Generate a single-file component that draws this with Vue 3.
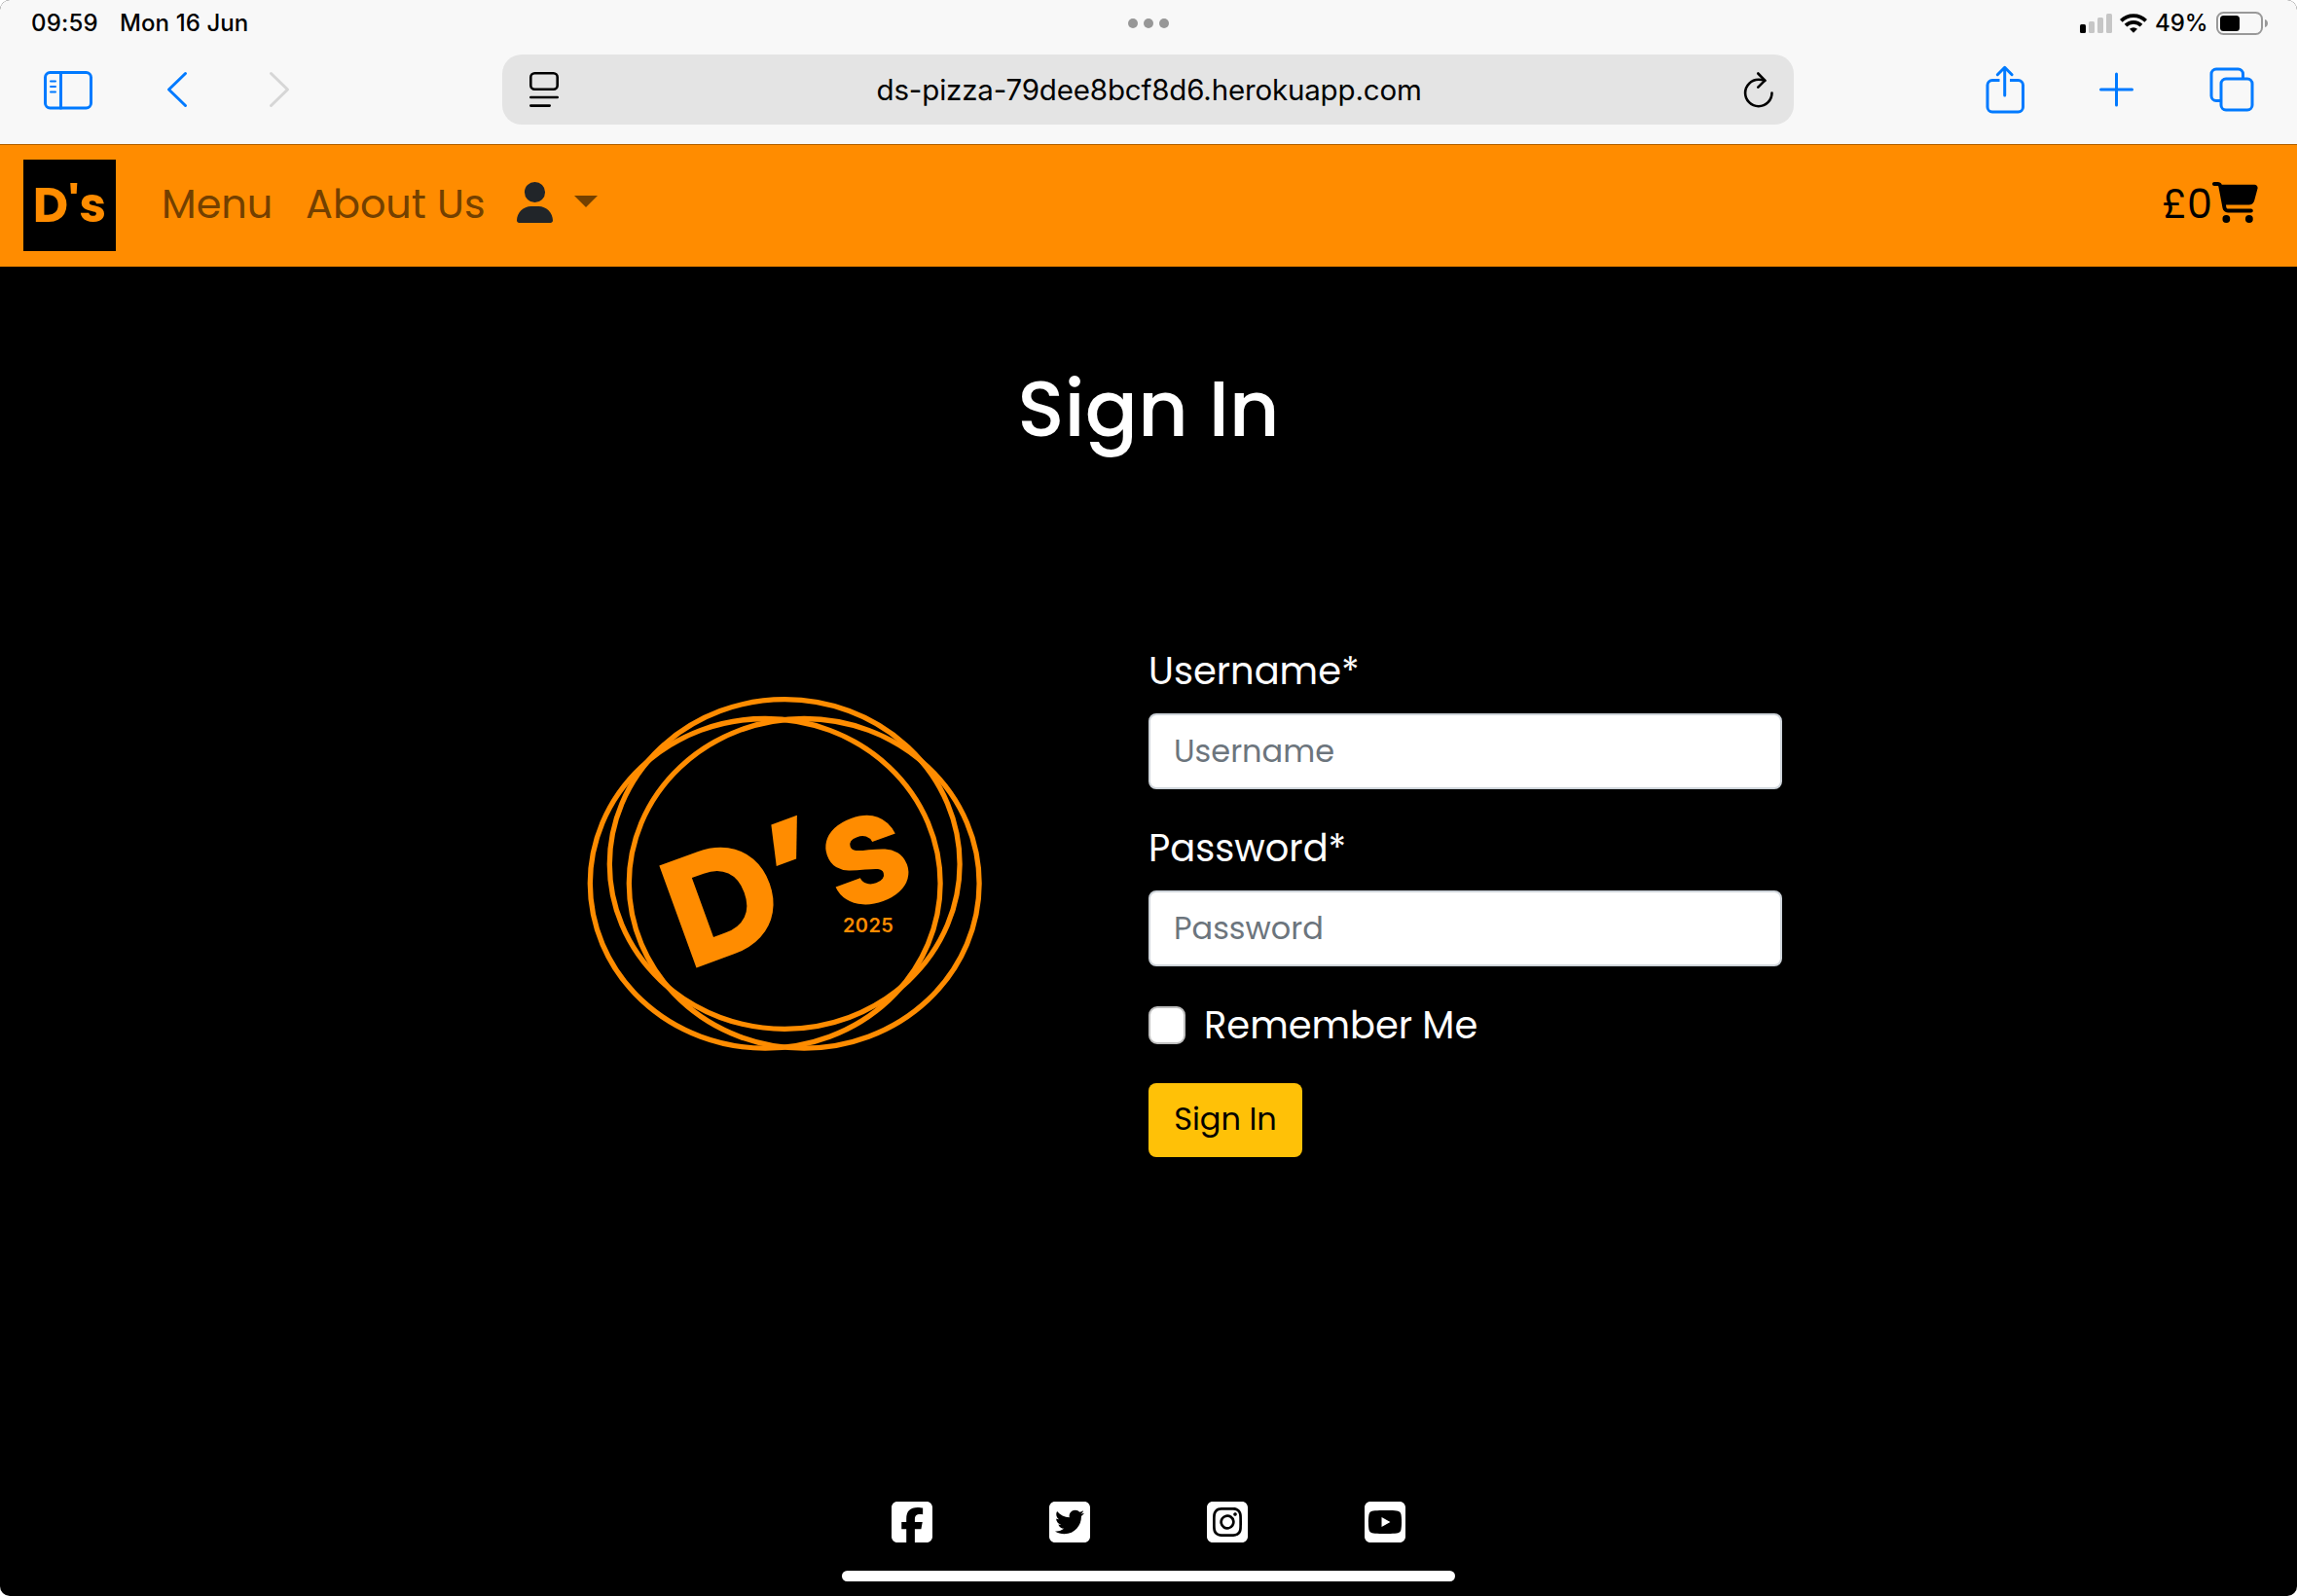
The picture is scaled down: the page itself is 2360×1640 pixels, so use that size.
<script setup>
import { ref } from 'vue'

const username = ref('')
const password = ref('')
const remember = ref(false)
const url = 'ds-pizza-79dee8bcf8d6.herokuapp.com'
const links = ['Menu', 'About Us']
const socials = [
  { name: 'facebook', d: 'M64 32C28.700 32 0 60.700 0 96V416c0 35.300 28.700 64 64 64h98.200V334.200H109.400V256h52.800V222.300c0-87.100 39.400-127.500 125-127.500c16.200 0 44.200 3.200 55.700 6.400V172c-6-.6-16.500-1-29.600-1c-42 0-58.200 15.900-58.200 57.200V256h83.600l-14.400 78.200H255V480H384c35.300 0 64-28.700 64-64V96c0-35.300-28.700-64-64-64H64z' },
  { name: 'twitter', d: 'M64 32C28.700 32 0 60.700 0 96V416c0 35.300 28.700 64 64 64H384c35.300 0 64-28.700 64-64V96c0-35.300-28.700-64-64-64H64zM351.300 199.300v0c0 86.700-66 186.600-186.600 186.600c-37.200 0-71.700-10.800-100.700-29.400c5.300 .6 10.400 .8 15.800 .8c30.700 0 58.900-10.400 81.400-28c-28.800-.6-53-19.500-61.300-45.500c10.100 1.500 19.200 1.500 29.600-1.200c-30-6.100-52.500-32.500-52.500-64.400v-.8c8.700 4.900 18.900 7.900 29.600 8.300c-9-6-16.400-14.100-21.500-23.600s-7.800-20.200-7.700-31c0-12.200 3.200-23.400 8.900-33.100c32.300 39.800 80.800 65.800 135.200 68.600c-9.300-44.500 24-80.600 64-80.600c18.900 0 35.900 7.900 47.900 20.700c14.800-2.800 29-8.300 41.600-15.800c-4.900 15.200-15.200 28-28.800 36.100c13.200-1.400 26-5.100 37.800-10.200c-8.900 13.100-20.100 24.700-32.900 34c.2 2.800 .2 5.700 .2 8.500z' },
  { name: 'instagram', d: 'M194.400 211.700a53.300 53.300 0 1 0 59.300 88.700 53.300 53.300 0 1 0 -59.300-88.700zm142.300-68.400c-5.200-5.200-11.500-9.300-18.400-12c-18.100-7.100-57.600-6.800-83.100-6.500c-4.100 0-7.900 .1-11.200 .1c-3.300 0-7.200 0-11.400-.1c-25.500-.3-64.800-.7-82.900 6.500c-6.900 2.700-13.100 6.800-18.400 12s-9.300 11.500-12 18.400c-7.100 18.100-6.700 57.700-6.500 83.200c0 4.100 .1 7.900 .1 11.100s0 7-.1 11.100c-.2 25.500-.6 65.100 6.500 83.200c2.700 6.900 6.800 13.100 12 18.400s11.500 9.300 18.400 12c18.100 7.100 57.600 6.800 83.100 6.500c4.100 0 7.900-.1 11.200-.1c3.300 0 7.200 0 11.400 .1c25.500 .3 64.800 .7 82.900-6.500c6.900-2.700 13.100-6.800 18.400-12s9.300-11.500 12-18.400c7.200-18 6.800-57.400 6.500-83c0-4.200-.1-8.100-.1-11.400s0-7.100 .1-11.400c.3-25.500 .7-64.900-6.500-83c-2.700-6.900-6.800-13.100-12-18.400zm-67.100 44.500A82 82 0 1 1 178.400 324.200a82 82 0 1 1 91.100-136.400zm29.200-1.300c-3.100-2.100-5.600-5.100-7.100-8.600s-1.800-7.300-1.100-11.100s2.600-7.100 5.200-9.800s6.100-4.500 9.800-5.200s7.600-.4 11.100 1.100s6.500 3.900 8.600 7s3.200 6.800 3.200 10.600c0 2.500-.5 5-1.400 7.300s-2.400 4.400-4.100 6.200s-3.900 3.200-6.200 4.200s-4.800 1.500-7.300 1.500c-3.800 0-7.500-1.100-10.600-3.200zM448 96c0-35.300-28.700-64-64-64H64C28.700 32 0 60.700 0 96V416c0 35.300 28.700 64 64 64H384c35.300 0 64-28.700 64-64V96zM357 389c-18.700 18.700-41.400 24.600-67 25.900c-26.400 1.500-105.600 1.500-132 0c-25.600-1.300-48.300-7.200-67-25.900s-24.600-41.400-25.800-67c-1.500-26.400-1.500-105.600 0-132c1.300-25.600 7.100-48.300 25.800-67s41.500-24.600 67-25.800c26.400-1.500 105.600-1.500 132 0c25.600 1.300 48.300 7.100 67 25.800s24.600 41.400 25.800 67c1.500 26.300 1.500 105.400 0 131.900c-1.300 25.600-7.100 48.300-25.800 67z' },
  { name: 'youtube', d: 'M282 256.200l-95.200-54.100V310.300L282 256.200zM384 32H64C28.700 32 0 60.700 0 96V416c0 35.300 28.700 64 64 64H384c35.300 0 64-28.700 64-64V96c0-35.300-28.700-64-64-64zm14.400 136.100c7.600 28.600 7.600 88.200 7.600 88.200s0 59.600-7.600 88.100c-4.200 15.800-16.500 27.700-32.200 31.900C337.900 384 224 384 224 384s-113.900 0-142.200-7.600c-15.700-4.200-28-16.100-32.200-31.900C42 315.900 42 256.300 42 256.300s0-59.700 7.600-88.200c4.200-15.800 16.500-28.200 32.200-32.400C110.100 128 224 128 224 128s113.900 0 142.200 7.700c15.700 4.200 28 16.600 32.200 32.400z' },
]
</script>

<template>
  <div class="screen">
    <header class="browser">
      <div class="status">
        <span class="time">09:59</span>
        <span class="date">Mon 16 Jun</span>
        <span class="dots"><i></i><i></i><i></i></span>
        <div class="system">
          <svg class="signal" width="34" height="20" viewBox="0 0 34 20">
            <rect x="0" y="11" width="6" height="9" rx="1.500" fill="#000" />
            <rect x="9" y="8" width="6" height="12" rx="1.500" fill="#c6c6c6" />
            <rect x="18" y="4" width="6" height="16" rx="1.500" fill="#c6c6c6" />
            <rect x="27" y="0" width="6" height="20" rx="1.500" fill="#c6c6c6" />
          </svg>
          <svg class="wifi" width="28" height="20" viewBox="0 0 28 20" fill="none" stroke="#000" stroke-width="3.800">
            <path d="M1.300 7.300a18 18 0 0 1 25.400 0" />
            <path d="M6 12.200a11.400 11.400 0 0 1 16 0" />
            <path d="M14 19.800l-4-4a5.700 5.700 0 0 1 8 0z" fill="#000" stroke="none" />
          </svg>
          <span class="percent">49%</span>
          <svg class="battery" width="54" height="24" viewBox="0 0 54 24">
            <rect x="1" y="1" width="46" height="22" rx="6.500" fill="none" stroke="#999" stroke-width="2" />
            <rect x="4" y="4" width="20" height="16" rx="3.500" fill="#000" />
            <path d="M50 8c4 1 4 7 0 8z" fill="#999" />
          </svg>
        </div>
      </div>
      <div class="toolbar">
        <svg class="sidebar" width="52" height="40" viewBox="0 0 52 40" fill="none" stroke="#007aff" stroke-width="3" stroke-linecap="round">
          <rect x="2.500" y="1.500" width="47" height="36.500" rx="5" />
          <path d="M18.500 2v36" />
          <path d="M8 10.500h5M8 16h5M8 21.500h5" stroke-width="2" />
        </svg>
        <svg class="back" width="22" height="38" viewBox="0 0 22 38" fill="none" stroke="#007aff" stroke-width="3" stroke-linecap="round" stroke-linejoin="round"><path d="M19.500 2.500L2.500 19l17 16.500" /></svg>
        <svg class="forward" width="22" height="38" viewBox="0 0 22 38" fill="none" stroke="#d6d6d6" stroke-width="3" stroke-linecap="round" stroke-linejoin="round"><path d="M2.500 2.500L19.500 19l-17 16.500" /></svg>
        <div class="address">
          <svg width="30" height="36" viewBox="0 0 30 36" fill="none" stroke="#000" stroke-width="2.600" stroke-linecap="round">
            <rect x="1.300" y="1.300" width="27.400" height="16.500" rx="4" />
            <path d="M1.300 26h27.400M1.300 34.600h19.400" />
          </svg>
          <span class="url">{{ url }}</span>
          <svg width="32" height="37" viewBox="0 0 32 37" fill="none" stroke="#000" stroke-width="2.600" stroke-linecap="round" stroke-linejoin="round">
            <path d="M30.500 21.500a13.700 13.700 0 1 1-13.700-13.700c2.500 0 4.500.3 6.500 1" />
            <path d="M16.300 1.500l7 7.200-7 7" />
          </svg>
        </div>
        <div class="tools">
          <svg width="40" height="50" viewBox="0 0 40 50" fill="none" stroke="#007aff" stroke-width="3" stroke-linecap="round" stroke-linejoin="round">
            <path d="M14.500 15.500H7a5 5 0 0 0-5 5v22.500a5 5 0 0 0 5 5h26.500a5 5 0 0 0 5-5V20.500a5 5 0 0 0-5-5H25" stroke-linecap="butt" />
            <path d="M19.700 31V3M12.300 9.700l7.400-7.400 7.400 7.400" />
          </svg>
          <svg width="36" height="36" viewBox="0 0 36 36" fill="none" stroke="#007aff" stroke-width="3" stroke-linecap="round"><path d="M17.500 2v32M1.500 18h32" /></svg>
          <svg width="46" height="46" viewBox="0 0 46 46" fill="none" stroke="#007aff" stroke-width="3">
            <rect x="12" y="12" width="32" height="32" rx="5" />
            <path d="M11.500 34.500H7a5 5 0 0 1-5-5V7a5 5 0 0 1 5-5h22.500a5 5 0 0 1 5 5v5" />
          </svg>
        </div>
      </div>
    </header>

    <nav class="navbar">
      <a class="brand"><span>D's</span></a>
      <a v-for="(link, i) in links" :key="link" class="link" :class="'link-' + i">{{ link }}</a>
      <svg class="user" width="37" height="42" viewBox="0 0 448 512" preserveAspectRatio="none" fill="#212529"><path d="M224 256A128 128 0 1 0 224 0a128 128 0 1 0 0 256zm-45.700 48C79.800 304 0 383.800 0 482.300C0 498.700 13.300 512 29.700 512H418.300c16.400 0 29.700-13.300 29.700-29.700C448 383.800 368.200 304 269.700 304H178.300z" /></svg>
      <i class="caret"></i>
      <a class="basket">
        <span>£0</span>
        <svg width="47" height="42" viewBox="0 0 576 512" fill="#000"><path d="M0 24C0 10.700 10.700 0 24 0H69.500c22 0 41.500 12.800 50.600 32h411c26.300 0 45.500 25 38.600 50.400l-41 152.300c-8.500 31.400-37 53.300-69.500 53.300H170.700l5.400 28.500c2.200 11.300 12.100 19.500 23.600 19.500H488c13.300 0 24 10.700 24 24s-10.700 24-24 24H199.700c-34.600 0-64.300-24.600-70.700-58.500L77.400 54.500c-.7-3.800-4-6.500-7.900-6.500H24C10.700 48 0 37.300 0 24zM128 464a48 48 0 1 1 96 0 48 48 0 1 1 -96 0zm336-48a48 48 0 1 1 0 96 48 48 0 1 1 0-96z" /></svg>
      </a>
    </nav>

    <main>
      <h1><span>Sign In</span></h1>
      <div class="content">
        <svg class="logo" width="450" height="410" viewBox="0 0 450 410" fill="#ff8c00">
          <g fill="none" stroke="#ff8c00" stroke-width="5.300">
            <ellipse cx="226.200" cy="198" rx="179.900" ry="169.300" />
            <ellipse cx="206.200" cy="217.800" rx="179.900" ry="169.300" />
            <ellipse cx="246.200" cy="217.800" rx="179.900" ry="169.300" />
          </g>
          <g class="mark" transform="translate(135.700 304.300) rotate(-20)">
            <text x="-10" y="0">D</text>
            <text class="apostrophe" transform="translate(101 4) skewX(-17)" text-anchor="middle">'</text>
            <text x="157.500" y="0">s</text>
          </g>
          <text class="year" x="286" y="267.500">2025</text>
        </svg>
        <form @submit.prevent>
          <label class="l-user" for="u">Username*</label>
          <input id="u" v-model="username" class="i-user" placeholder="Username" />
          <label class="l-pass" for="p">Password*</label>
          <input id="p" v-model="password" class="i-pass" type="password" placeholder="Password" />
          <div class="remember">
            <input id="r" v-model="remember" type="checkbox" />
            <label for="r">Remember Me</label>
          </div>
          <button><span>Sign In</span></button>
        </form>
      </div>
    </main>

    <footer>
      <div class="socials">
        <svg v-for="s in socials" :key="s.name" width="42" height="42" viewBox="0 32 448 448" fill="#fff"><path :d="s.d" /></svg>
      </div>
      <div class="home"></div>
    </footer>
  </div>
</template>

<style>
body { background: #fff; }
</style>

<style scoped>
* { box-sizing: border-box; }
.screen {
  width: 2360px;
  height: 1640px;
  display: flex;
  flex-direction: column;
  background: #000;
  border-radius: 10px;
  overflow: hidden;
  font-family: Poppins, Inter, sans-serif;
}
svg { display: block; flex: none; }
span, a, label { white-space: nowrap; }

.browser {
  height: 149px;
  flex: none;
  background: #f8f8f8;
  border-bottom: 1px solid #b06000;
  font-family: Inter, sans-serif;
  color: #000;
}
.status { height: 48px; position: relative; display: flex; align-items: center; padding: 0 29px 0 32px; font-size: 24px; font-weight: 500; }
.time { width: 91px; letter-spacing: 0.2px; padding-bottom: 1px; }
.date { letter-spacing: 0.1px; padding-bottom: 1px; }
.dots { position: absolute; left: 50%; top: 19px; display: flex; gap: 6px; transform: translateX(-50%); }
.dots i { width: 10px; height: 10px; border-radius: 50%; background: #979797; }
.system { margin-left: auto; display: flex; align-items: center; }
.wifi { margin-left: 7px; }
.percent { margin-left: 8px; width: 63px; padding-bottom: 1px; }

.toolbar { height: 100px; display: flex; align-items: flex-start; padding: 8px 44px 0; }
.sidebar { margin-top: 17px; }
.back { margin: 17px 0 0 75px; }
.forward { margin: 17px 0 0 83px; }
.address { width: 1328px; height: 72px; margin-left: 218px; border-radius: 20px; background: #e4e4e4; display: flex; align-items: center; justify-content: space-between; padding: 0 21px 0 28px; }
.url { font-size: 29.500px; letter-spacing: -0.17px; margin-left: -3px; }
.tools { margin-left: 197px; width: 276px; display: flex; align-items: center; justify-content: space-between; height: 72px; }

.navbar { height: 125px; flex: none; background: #ff8c00; display: flex; align-items: center; padding: 0 40px 2px 24px; font-size: 41.400px; }
.brand { width: 95px; height: 94px; background: #000; color: #ff8c00; display: flex; align-items: center; justify-content: center; font-size: 50px; font-weight: 700; }
.link { color: #734000; padding-bottom: 3px; }
.link-0 { margin-left: 47px; width: 148px; }
.link-1 { width: 217px; }
.user { margin-top: -6px; }
.caret { margin: -8px 0 0 22px; border: 12px solid transparent; border-top-color: #734000; border-bottom: 0; }
.basket { margin-left: auto; display: flex; align-items: center; color: #000; }
.basket span { padding-bottom: 3px; }
.basket svg { margin-top: -6px; }

main { flex: 1; color: #fff; }
h1 { margin: 0; padding-top: 92px; text-align: center; font-size: 80px; font-weight: 500; line-height: 108px; }
.content { display: flex; padding-left: 580px; margin-top: 184px; }
.logo { margin-top: 32px; }
.mark { font-size: 159px; font-weight: 700; }
.apostrophe { font-family: "Open Sans", sans-serif; font-size: 162px; font-weight: 800; }
.year { font-family: Inter, sans-serif; font-size: 20px; font-weight: 600; letter-spacing: 0.4px; }
form { margin-left: 150px; width: 651px; display: flex; flex-direction: column; align-items: flex-start; }
label { font-size: 38.400px; line-height: 60px; height: 58px; }
.l-user { margin-top: 2px; }
.l-pass { margin-top: 31px; }
form > input { margin-top: 15px; width: 651px; height: 78px; border: 2px solid #ced4da; border-radius: 8px; background: #fff; padding: 0 24px; font: inherit; font-size: 32px; }
form > input::placeholder { color: #6c757d; opacity: 1; }
.remember { display: flex; align-items: center; margin-top: 31px; }
.remember input { appearance: none; margin: 0 19px 0 0; width: 38px; height: 39px; border: 2px solid #bfbfbf; border-radius: 9px; background: #fff; }
button { margin-top: 31px; width: 158px; height: 76px; border: 0; border-radius: 8px; background: #ffc107; color: #000; font: inherit; font-size: 32px; padding: 0 0 2px; }

footer { height: 97px; flex: none; display: flex; flex-direction: column; align-items: center; }
.socials { display: flex; gap: 120px; }
.home { margin-top: 29px; width: 630px; height: 11px; border-radius: 6px; background: #fff; }
</style>
